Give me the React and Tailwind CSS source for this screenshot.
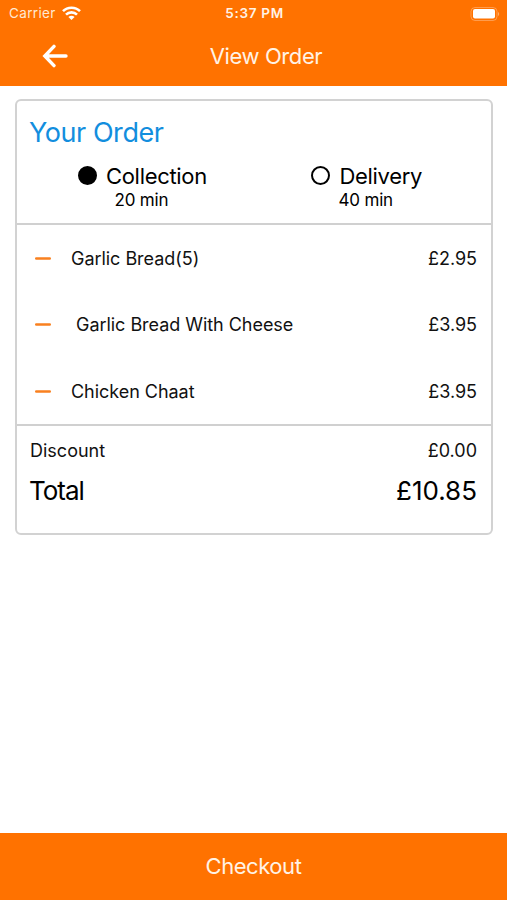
const items = [
  { name: "Garlic Bread(5)", price: "£2.95" },
  { name: "Garlic Bread With Cheese", price: "£3.95", indent: true },
  { name: "Chicken Chaat", price: "£3.95" },
];

function StatusBar() {
  return (
    <div className="flex h-[27px] items-center justify-between pl-[9px] pr-[7px]">
      <div className="flex w-[150px] items-center gap-[6px]">
        <span className="text-[13.5px] tracking-[0.35px] text-[#ffe9d2]">Carrier</span>
        <svg width="19" height="15" viewBox="0 0 19 15" fill="none" stroke="currentColor" strokeWidth="2.6">
          <path d="M1 5.2C5.5 0.6 13.5 0.6 18 5.2" />
          <path d="M4 8.6C7 5.6 12 5.6 15 8.6" />
          <path d="M6.4 10.9C8.2 9.2 10.8 9.2 12.6 10.9L9.5 14Z" fill="currentColor" stroke="none" />
        </svg>
      </div>
      <span className="text-[13.5px] font-semibold tracking-[0.7px] text-[#fff3e6]">5:37 PM</span>
      <div className="flex w-[150px] items-center justify-end">
        <svg width="30" height="14" viewBox="0 0 30 14">
          <rect x="1" y="0.5" width="26" height="13" rx="4" fill="none" stroke="currentColor" strokeOpacity="0.3" />
          <rect x="3" y="2" width="22" height="9.5" rx="2" fill="currentColor" />
          <path d="M28 5C29.6 5.5 29.6 8.5 28 9Z" fill="currentColor" fillOpacity="0.4" />
        </svg>
      </div>
    </div>
  );
}

function Header() {
  return (
    <header className="h-[86px] bg-[#ff7200] text-white">
      <StatusBar />
      <div className="grid h-[58px] grid-cols-[1fr_auto_1fr] items-center">
        <button className="ml-[42px] w-[26px]" aria-label="Back">
          <svg width="26" height="24" viewBox="0 0 26 24" fill="none" stroke="currentColor" strokeWidth="3.4" strokeLinecap="round">
            <path d="M24 12H3.5M12 2.4L2.8 12L12 21.6" />
          </svg>
        </button>
        <h1 className="pl-[25px] text-[22px] tracking-[-0.4px] text-[#fff3e6]">View Order</h1>
      </div>
    </header>
  );
}

function OrderType({ label, time, selected }) {
  return (
    <div className="flex flex-col items-center">
      <div className="flex items-center gap-[9px]">
        <span className={`-mt-px h-[19px] w-[19px] rounded-full border-2 border-black ${selected ? "bg-black" : ""}`} />
        <span className="text-[22px] leading-[28px] tracking-[-0.32px]">{label}</span>
      </div>
      <span className="pr-[2px] text-[17px] leading-[20px] tracking-[-0.2px]">{time}</span>
    </div>
  );
}

export default function App() {
  return (
    <div className="flex h-[900px] w-[507px] flex-col bg-white font-['Inter',sans-serif] text-black">
      <Header />
      <main className="flex-1 pl-[15px] pr-[14px] pt-[13px]">
        <section className="h-[436px] rounded-md border-2 border-[#d2d2d2]">
          <div className="h-[124px] border-b-2 border-[#d0d0d0] pt-[15px]">
            <h2 className="pl-3 text-[27px] leading-[33px] tracking-[-0.45px] text-[#128ede]">Your Order</h2>
            <div className="mt-[13px] flex justify-between pl-[61px] pr-[69px]">
              <OrderType label="Collection" time="20 min" selected />
              <OrderType label="Delivery" time="40 min" />
            </div>
          </div>
          <ul className="h-[201px] border-b-2 border-[#d0d0d0]">
            {items.map((item) => (
              <li
                key={item.name}
                className="flex h-[66.5px] items-center pl-[18px] pr-[14px] text-[18px] tracking-[-0.04px] text-[#111]"
              >
                <svg className="h-[3px] w-4" viewBox="0 0 16 3" stroke="#f9801f" strokeWidth="2.4" strokeLinecap="round">
                  <path d="M1.2 1.5H14.8" />
                </svg>
                <span className={item.indent ? "ml-[25px]" : "ml-5"}>{item.name}</span>
                <span className="ml-auto">{item.price}</span>
              </li>
            ))}
          </ul>
          <div className="pl-[13px] pr-[14px] pt-[11px]">
            <div className="flex justify-between text-[18px] leading-[28px] text-[#111]">
              <span>Discount</span>
              <span>£0.00</span>
            </div>
            <div className="mt-[10px] flex justify-between text-[26px] leading-[32px]">
              <span className="-ml-px tracking-[-1px]">Total</span>
              <span>£10.85</span>
            </div>
          </div>
        </section>
      </main>
      <button className="h-[67px] bg-[#ff7200] text-[22px] tracking-[-0.45px] text-[#fff3e6]">Checkout</button>
    </div>
  );
}
